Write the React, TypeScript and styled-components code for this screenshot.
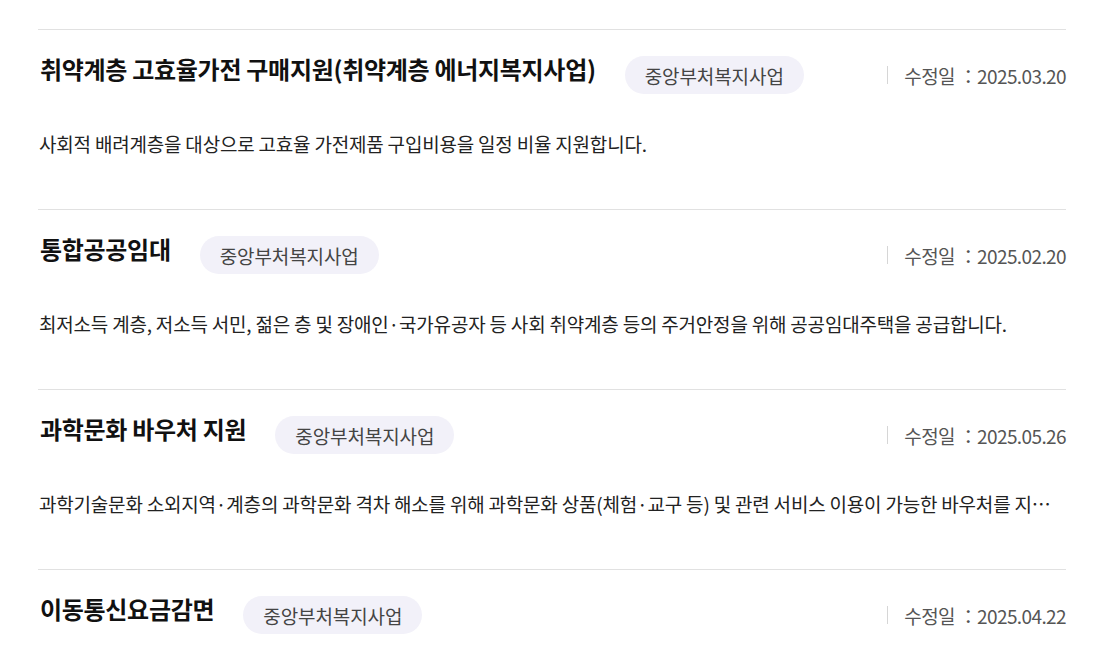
import React from 'react';
import styled, { createGlobalStyle } from 'styled-components';

const GlobalStyle = createGlobalStyle`
  html, body {
    margin: 0;
    padding: 0;
    background: #fff;
    font-family: 'Noto Sans CJK KR', 'Noto Sans', sans-serif;
    color: #222;
  }
`;

interface Program {
  title: string;
  category: string;
  updated: string;
  summary: string;
}

const programs: Program[] = [
  {
    title: '취약계층 고효율가전 구매지원(취약계층 에너지복지사업)',
    category: '중앙부처복지사업',
    updated: '2025.03.20',
    summary: '사회적 배려계층을 대상으로 고효율 가전제품 구입비용을 일정 비율 지원합니다.',
  },
  {
    title: '통합공공임대',
    category: '중앙부처복지사업',
    updated: '2025.02.20',
    summary:
      '최저소득 계층, 저소득 서민, 젊은 층 및 장애인·국가유공자 등 사회 취약계층 등의 주거안정을 위해 공공임대주택을 공급합니다.',
  },
  {
    title: '과학문화 바우처 지원',
    category: '중앙부처복지사업',
    updated: '2025.05.26',
    summary:
      '과학기술문화 소외지역·계층의 과학문화 격차 해소를 위해 과학문화 상품(체험·교구 등) 및 관련 서비스 이용이 가능한 바우처를 지원합니다.',
  },
  {
    title: '이동통신요금감면',
    category: '중앙부처복지사업',
    updated: '2025.04.22',
    summary: '',
  },
];

const ListWrap = styled.ul`
  list-style: none;
  margin: 0;
  padding: 29px 36px 0 38px;
`;

const Item = styled.li`
  box-sizing: border-box;
  height: 180px;
  border-top: 1px solid #e1e1e1;
  padding-top: 26px;
`;

const Header = styled.div`
  display: flex;
  align-items: center;
  height: 38px;
`;

const Title = styled.h3`
  margin: 0 29px 12px 2px;
  font-size: 24px;
  font-weight: 700;
  line-height: 30px;
  letter-spacing: -0.3px;
  color: #111;
  white-space: nowrap;
`;

const Badge = styled.span`
  display: inline-flex;
  align-items: center;
  height: 38px;
  padding: 0 20px;
  border-radius: 19px;
  background: #f2f1f9;
  color: #444;
  font-size: 19px;
  letter-spacing: -0.1px;
  white-space: nowrap;
`;

const Updated = styled.div`
  margin-left: auto;
  display: flex;
  align-items: center;
  gap: 16px;
  color: #555;
  font-size: 19px;
  letter-spacing: -0.6px;
  white-space: nowrap;

  &::before {
    content: '';
    width: 1px;
    height: 18px;
    background: #d6d6d6;
  }
`;

const Summary = styled.p`
  margin: 36px 0 0 1px;
  font-size: 19px;
  line-height: 28px;
  letter-spacing: -0.2px;
  color: #222;
  white-space: nowrap;
  overflow: hidden;
  text-overflow: ellipsis;
`;

export default function App() {
  return (
    <>
      <GlobalStyle />
      <ListWrap>
        {programs.map((p) => (
          <Item key={p.title}>
            <Header>
              <Title>{p.title}</Title>
              <Badge>{p.category}</Badge>
              <Updated>수정일 ：{p.updated}</Updated>
            </Header>
            {p.summary && <Summary>{p.summary}</Summary>}
          </Item>
        ))}
      </ListWrap>
    </>
  );
}
